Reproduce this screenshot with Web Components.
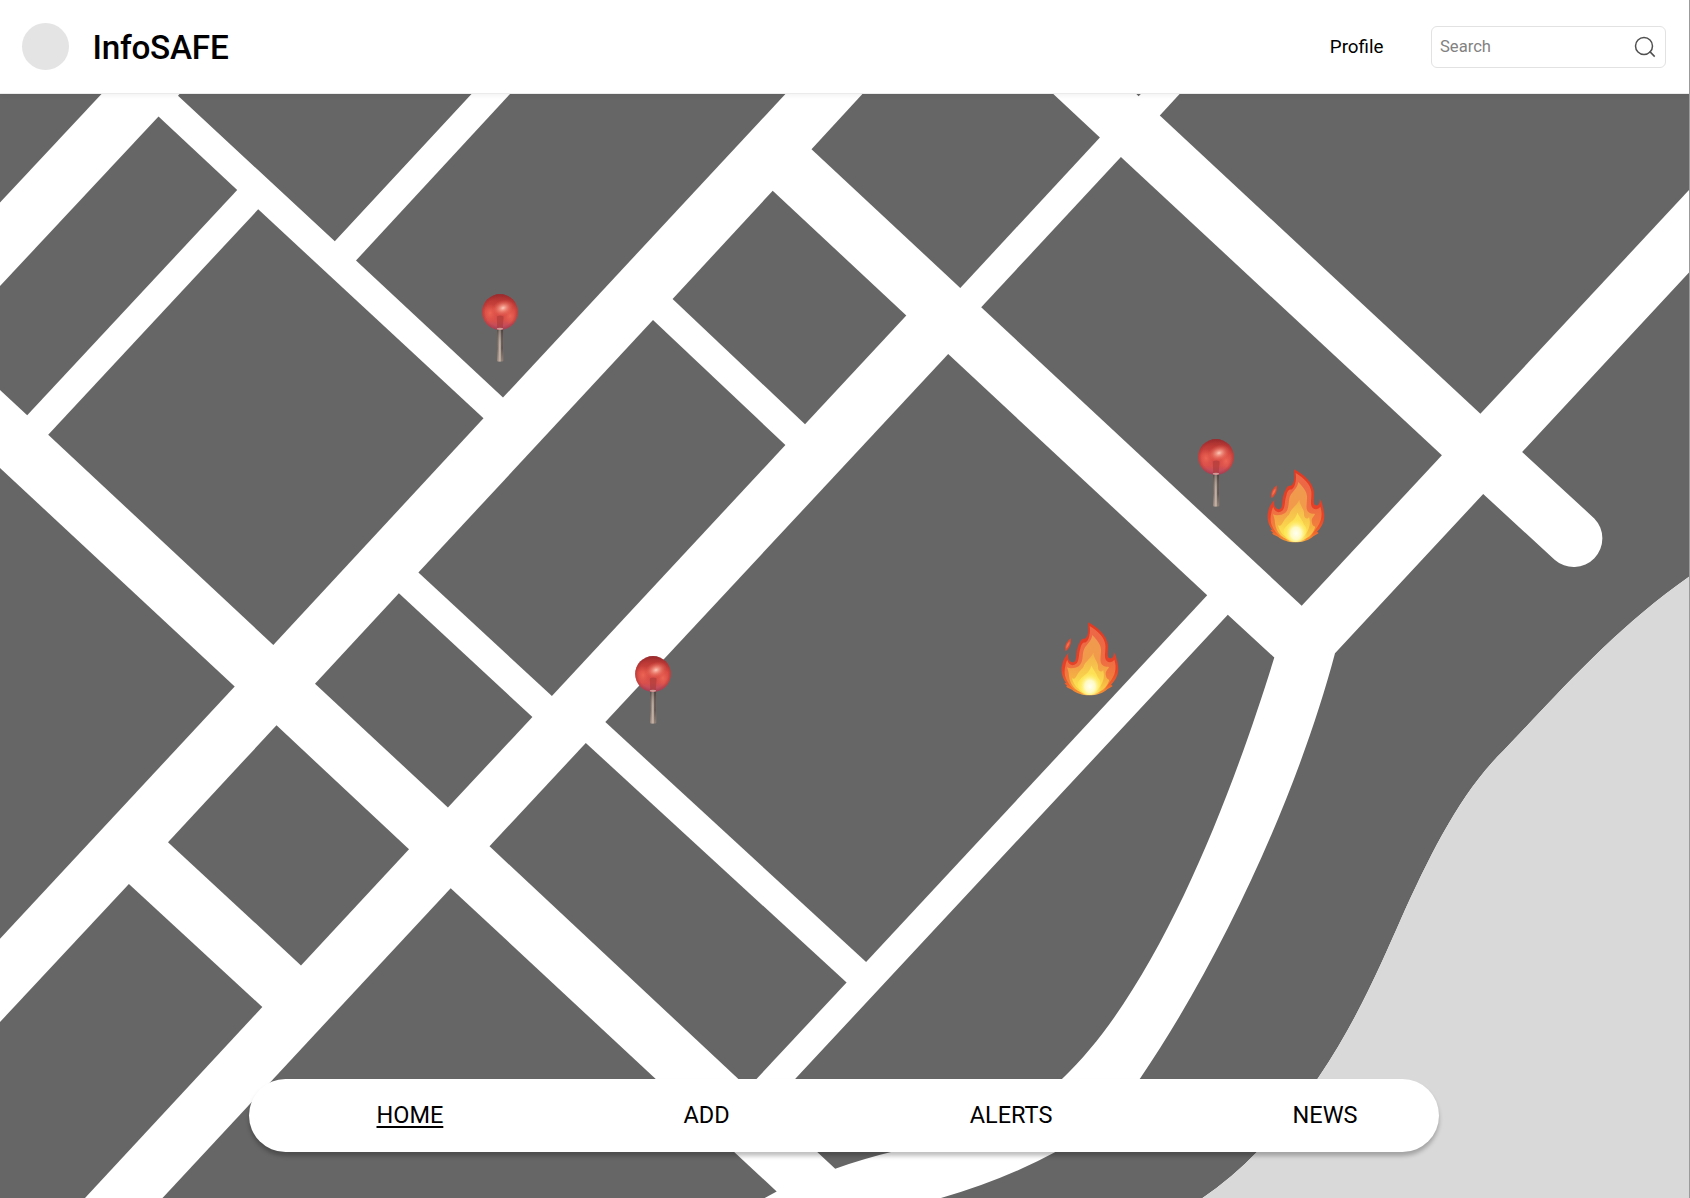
<!DOCTYPE html>
<html lang="en">
<head>
<meta charset="utf-8">
<title>InfoSAFE</title>
<style>
  html, body { margin: 0; height: 100%; overflow: hidden; }
  body { background: #fff; font-family: Roboto, sans-serif; color: #000; }
</style>
</head>
<body>
<safe-app>
  <safe-header slot="header" brand="InfoSAFE">
    <a slot="links">Profile</a>
    <safe-search slot="search">Search</safe-search>
  </safe-header>
  <safe-map slot="map">
    <map-pin x="500.3" y="311.5"></map-pin>
    <map-pin x="1215.5" y="457"></map-pin>
    <map-pin x="653" y="673.5"></map-pin>
    <map-fire x="1265.7" y="468.3"></map-fire>
    <map-fire x="1060.3" y="620.7"></map-fire>
  </safe-map>
  <safe-nav slot="nav">
    <nav-item current>HOME</nav-item>
    <nav-item>ADD</nav-item>
    <nav-item>ALERTS</nav-item>
    <nav-item>NEWS</nav-item>
  </safe-nav>
</safe-app>

<script>
const define = (name, html, setup) => {
  const template = document.createElement('template');
  template.innerHTML = html;
  customElements.define(name, class extends HTMLElement {
    constructor() {
      super();
      this.attachShadow({ mode: 'open' }).append(template.content.cloneNode(true));
    }
    connectedCallback() { if (setup) setup(this, this.shadowRoot); }
  });
};

const placeAt = (host) => {
  host.style.left = host.getAttribute('x') + 'px';
  host.style.top = (host.getAttribute('y') - 94) + 'px';
};

define('safe-app', `
  <style>
    :host { display: grid; grid-template-rows: 94px 1104px; height: 1198px; width: 1689px; border-right: 1px solid #9b9b9b; overflow: hidden; }
    .header { grid-area: 1 / 1; z-index: 1; }
    .map { grid-area: 2 / 1; min-width: 0; }
    .nav { grid-area: 2 / 1; z-index: 2; align-self: end; padding: 0 250px 46.5px 248.5px; }
  </style>
  <div class="header"><slot name="header"></slot></div>
  <div class="map"><slot name="map"></slot></div>
  <div class="nav"><slot name="nav"></slot></div>
`);

define('safe-header', `
  <style>
    :host { display: flex; align-items: center; box-sizing: border-box; height: 94px; padding: 0 23px 0 22px;
            background: #fff; border-bottom: 1px solid #ebebeb; box-shadow: 0 2px 4px rgba(0,0,0,.05); }
    .avatar { width: 47px; height: 47px; border-radius: 50%; background: #e4e4e4; }
    h1 { margin: 2px auto 0 23.5px; font-size: 33.3px; line-height: 40px; font-weight: 500; letter-spacing: -.25px; }
    ::slotted(a) { font-size: 18.8px; line-height: 24px; margin: 0 47.5px 0 0; }
  </style>
  <div class="avatar"></div>
  <h1></h1>
  <slot name="links"></slot>
  <slot name="search"></slot>
`, (host, root) => { root.querySelector('h1').textContent = host.getAttribute('brand'); });

define('safe-search', `
  <style>
    :host { display: flex; align-items: center; justify-content: space-between; box-sizing: border-box;
            width: 235px; height: 42px; padding: 0 9px 0 8px; border: 1px solid #e2e2e2; border-radius: 6px;
            font-size: 16.6px; line-height: 22px; color: #828282; }
    svg { display: block; }
  </style>
  <span><slot></slot></span>
  <svg width="22" height="22" viewBox="0 0 22 22" fill="none" stroke="#505050" stroke-width="1.5">
    <circle cx="10" cy="10" r="8.5"/><path d="M15.6 15.4 20.7 20.6"/>
  </svg>
`);

define('safe-map', `
  <style>
    :host { display: block; position: relative; height: 1104px; overflow: hidden; background: #fff; }
    svg { display: block; }
    .blocks { fill: #666; }
  </style>
  <svg width="1689" height="1104" viewBox="0 94 1689 1104">
    <g class="blocks">
      <path d="M0 94H101.5L0 202.5Z"/>
      <path d="M158.5 116.5 237.2 190 27.2 415.2 0 390V286Z"/>
      <path d="M176 94H471.5L334.8 241.3 178 95.7 179.5 94Z"/>
      <path d="M510 94H785.4L503 397.5 356 260.5Z"/>
      <path d="M258.2 209.3 483.5 418.3 273.3 645 48.2 434.7Z"/>
      <path d="M0 468 234.7 686.5 0 938.7Z"/>
      <path d="M276.5 725.3 409 849.3 301 965.4 168 842.2Z"/>
      <path d="M128.9 884 262.3 1007 85 1198H0V1022Z"/>
      <path d="M398.9 593.3 532.4 717 447.9 807.5 315 683.7Z"/>
      <path d="M653 320 785.4 445 551.9 696 418.4 572.5Z"/>
      <path d="M772.7 190.8 906.3 315.4 805 424.3 672.6 299Z"/>
      <path d="M862.4 94H1053.3L1099.9 137.5 960.3 288 811.5 149.2Z"/>
      <path d="M1120.9 157 1441.9 455.3 1301.7 605.7 981.2 307.3Z"/>
      <path d="M1136.4 94H1140.8L1138.6 96.2Z"/>
      <path d="M1179.6 94H1690V189L1480.4 413.8 1159.8 115.5Z"/>
      <path d="M948.2 354 1207.2 595.2 866.1 962 605.3 722Z"/>
      <path d="M585.8 743 846.6 982.5 748 1088 489.5 846.3Z"/>
      <path d="M450.7 888.2 776.7 1191.5 764.7 1198H162.5Z"/>
      <path d="M1227.8 614.8 1274.3 657.5C1235 785 1161 985 1063 1078 1020 1118 960 1134 899 1150Q862 1159 835.2 1168.7L769 1107Z"/>
      <path d="M1483.2 494 1554.6 559.8A28.7 28.7 0 0 0 1594.3 518.4L1522.1 452 1690 271.5V576C1618 626 1565 686 1504 750 1460 793 1430 855 1401.4 918 1374 980 1335 1074 1258 1151Q1232 1178 1202.5 1198H941Q1004 1180 1057.3 1151C1090 1136 1118 1108 1140.4 1078 1222 958 1298 793 1335 653.3Z"/>
    </g>
    <path fill="#d9d9d9" d="M1690 576C1618 626 1565 686 1504 750 1460 793 1430 855 1401.4 918 1374 980 1335 1074 1258 1151Q1232 1178 1202.5 1198H1690Z"/>
  </svg>
  <slot></slot>
`);

define('map-pin', `
  <style>
    :host { position: absolute; width: 0; height: 0; }
    svg { display: block; margin: -20px 0 0 -20px; }
  </style>
  <svg width="40" height="74" viewBox="-20 -20 40 74">
    <defs>
      <linearGradient id="metal">
        <stop offset="0" stop-color="#5f5652"/><stop offset=".2" stop-color="#8a7d76"/>
        <stop offset=".45" stop-color="#c9b9ad"/><stop offset=".62" stop-color="#a3958c"/>
        <stop offset=".78" stop-color="#3f3735"/><stop offset="1" stop-color="#736863"/>
      </linearGradient>
      <linearGradient id="fade" x2="0" y2="1">
        <stop offset="0" stop-color="#2e2523" stop-opacity=".45"/><stop offset=".6" stop-color="#c9b5a5" stop-opacity=".05"/>
        <stop offset="1" stop-color="#c9b3a3" stop-opacity=".5"/>
      </linearGradient>
      <linearGradient id="ball" x2="0" y2="1">
        <stop offset="0" stop-color="#9c2c2d"/><stop offset=".2" stop-color="#bd3a36"/>
        <stop offset=".45" stop-color="#d84b43"/><stop offset=".75" stop-color="#d94f4b"/>
        <stop offset="1" stop-color="#b04a6a"/>
      </linearGradient>
      <radialGradient id="rim"><stop offset=".8" stop-color="#9a262b" stop-opacity="0"/><stop offset="1" stop-color="#93292f" stop-opacity=".4"/></radialGradient>
      <radialGradient id="shine"><stop offset="0" stop-color="#ffd2c2" stop-opacity=".95"/><stop offset=".4" stop-color="#f79a87" stop-opacity=".65"/><stop offset="1" stop-color="#e8604f" stop-opacity="0"/></radialGradient>
      <radialGradient id="glow"><stop offset="0" stop-color="#f8735e" stop-opacity=".65"/><stop offset="1" stop-color="#e8604f" stop-opacity="0"/></radialGradient>
    </defs>
    <rect x="-3" y="16" width="6.2" height="33.6" rx="1" fill="url(#metal)"/>
    <rect x="-3" y="16" width="6.2" height="33.6" rx="1" fill="url(#fade)"/>
    <circle r="17.9" fill="url(#ball)"/>
    <ellipse cx="-10" cy="1" rx="7" ry="9" fill="url(#glow)"/>
    <ellipse cx="10" cy="4" rx="7" ry="9" fill="url(#glow)"/>
    <ellipse cx="3" cy="-4" rx="11" ry="8" transform="rotate(-18 3 -4)" fill="url(#shine)"/>
    <path d="M-3.2 4.5Q0 2.500 3.600 4.500L2.800 16H-2.800Z" fill="#a63a38" opacity=".6"/>
    <circle r="17.9" fill="url(#rim)"/>
    <ellipse cx="0" cy="16.8" rx="3.2" ry="1.1" fill="#d09a97"/>
  </svg>
`, placeAt);

define('map-fire', `
  <style>
    :host { position: absolute; width: 60px; height: 76px; }
    svg { display: block; }
  </style>
  <svg width="60" height="76" viewBox="258 145 180 228">
    <defs>
      <linearGradient id="red" x2="0" y2="1">
        <stop offset="0" stop-color="#e23a22"/><stop offset=".65" stop-color="#e5432a"/><stop offset=".85" stop-color="#ee602b"/><stop offset="1" stop-color="#f59a35"/>
      </linearGradient>
      <linearGradient id="mid" x2="0" y2="1">
        <stop offset="0" stop-color="#ec6747"/><stop offset=".5" stop-color="#ee6c43"/><stop offset=".8" stop-color="#f1813c"/><stop offset="1" stop-color="#f8a63a"/>
      </linearGradient>
      <linearGradient id="orange" x2="0" y2="1">
        <stop offset="0" stop-color="#ef9a50"/><stop offset=".45" stop-color="#f29a4a"/><stop offset=".75" stop-color="#f5b342"/><stop offset="1" stop-color="#fbdc48"/>
      </linearGradient>
      <linearGradient id="gold" x2="0" y2="1">
        <stop offset="0" stop-color="#f3b04c"/><stop offset=".5" stop-color="#f8cc4c"/><stop offset="1" stop-color="#ffee55"/>
      </linearGradient>
      <radialGradient id="core"><stop offset="0" stop-color="#fffff2"/><stop offset=".45" stop-color="#fffbc8" stop-opacity=".95"/><stop offset="1" stop-color="#ffee58" stop-opacity="0"/></radialGradient>
      <clipPath id="flame"><path id="shape" d="M343 149C370 164 396 186 401 214C404 230 397 250 405 256C413 261 421 252 419 238C427 248 429 262 432 280C436 303 425 323 411 336L416 340C411 345 404 347 401 349C388 362 366 368 346 368C325 368 305 361 294 351C288 349 280 346 276 341L280 340C276 337 273 334 271 330L277 331C264 315 259 293 265 274C268 260 275 249 284 240C280 252 282 266 296 269C308 269 306 250 308 237C311 219 317 209 322 201C327 196 334 203 339 191C346 177 341 163 343 149Z"/></clipPath>
    </defs>
    <path d="M290 197C293 213 287 227 275 236C269 220 278 207 290 197Z" fill="#e5492f"/>
    <path d="M287 206C288 215 283 222 277 228C275 219 280 212 287 206Z" fill="#ee7050"/>
    <use href="#shape" fill="url(#red)"/>
    <g clip-path="url(#flame)">
      <path d="M347 160C372 176 391 193 394 216C396 236 388 254 398 265C407 272 416 268 421 261C427 280 427 300 412 322L390 352L346 368L301 350C276 329 267 305 274 280C276 270 277 266 280 262C283 273 290 279 300 277C318 271 312 248 319 228C322 213 328 209 333 210C346 206 350 180 347 160Z" fill="url(#mid)"/>
      <path d="M355 187C368 201 380 214 381 230C382 248 376 263 383 275C389 283 399 282 405 283C403 291 392 294 396 310C398 323 408 318 405 324C399 343 382 360 346 368C311 360 287 340 285 310C284 296 281 289 279 284C288 289 304 287 315 280C331 267 322 240 333 224C343 210 353 203 355 187Z" fill="url(#orange)"/>
      <path d="M358 240C358 256 374 269 372 283C371 297 384 301 387 292C397 321 378 354 346 368C314 355 298 337 294 317C303 322 307 311 311 304C321 290 329 286 330 278C338 262 350 258 358 240Z" fill="url(#gold)"/>
      <path d="M352 279C357 290 368 302 372 315C388 329 377 356 347 368C317 359 302 339 316 323C326 308 346 304 352 279Z" fill="#ffe95a" opacity=".7"/>
      <ellipse cx="348" cy="341" rx="35" ry="41" fill="url(#core)"/>
    </g>
  </svg>
`, placeAt);

define('safe-nav', `
  <style>
    :host { display: flex; align-items: center; justify-content: space-between; box-sizing: border-box; height: 73px;
            padding: 0 81.5px 0 128px; background: #fff; border-radius: 36.5px; box-shadow: 0 4px 4px rgba(0,0,0,.25); }
  </style>
  <slot></slot>
`);

define('nav-item', `
  <style>
    :host { display: block; font-size: 23.5px; line-height: 28px; }
    :host([current]) { text-decoration: underline; text-decoration-thickness: 1.5px; text-underline-offset: 2.5px; }
  </style>
  <slot></slot>
`);
</script>
</body>
</html>
